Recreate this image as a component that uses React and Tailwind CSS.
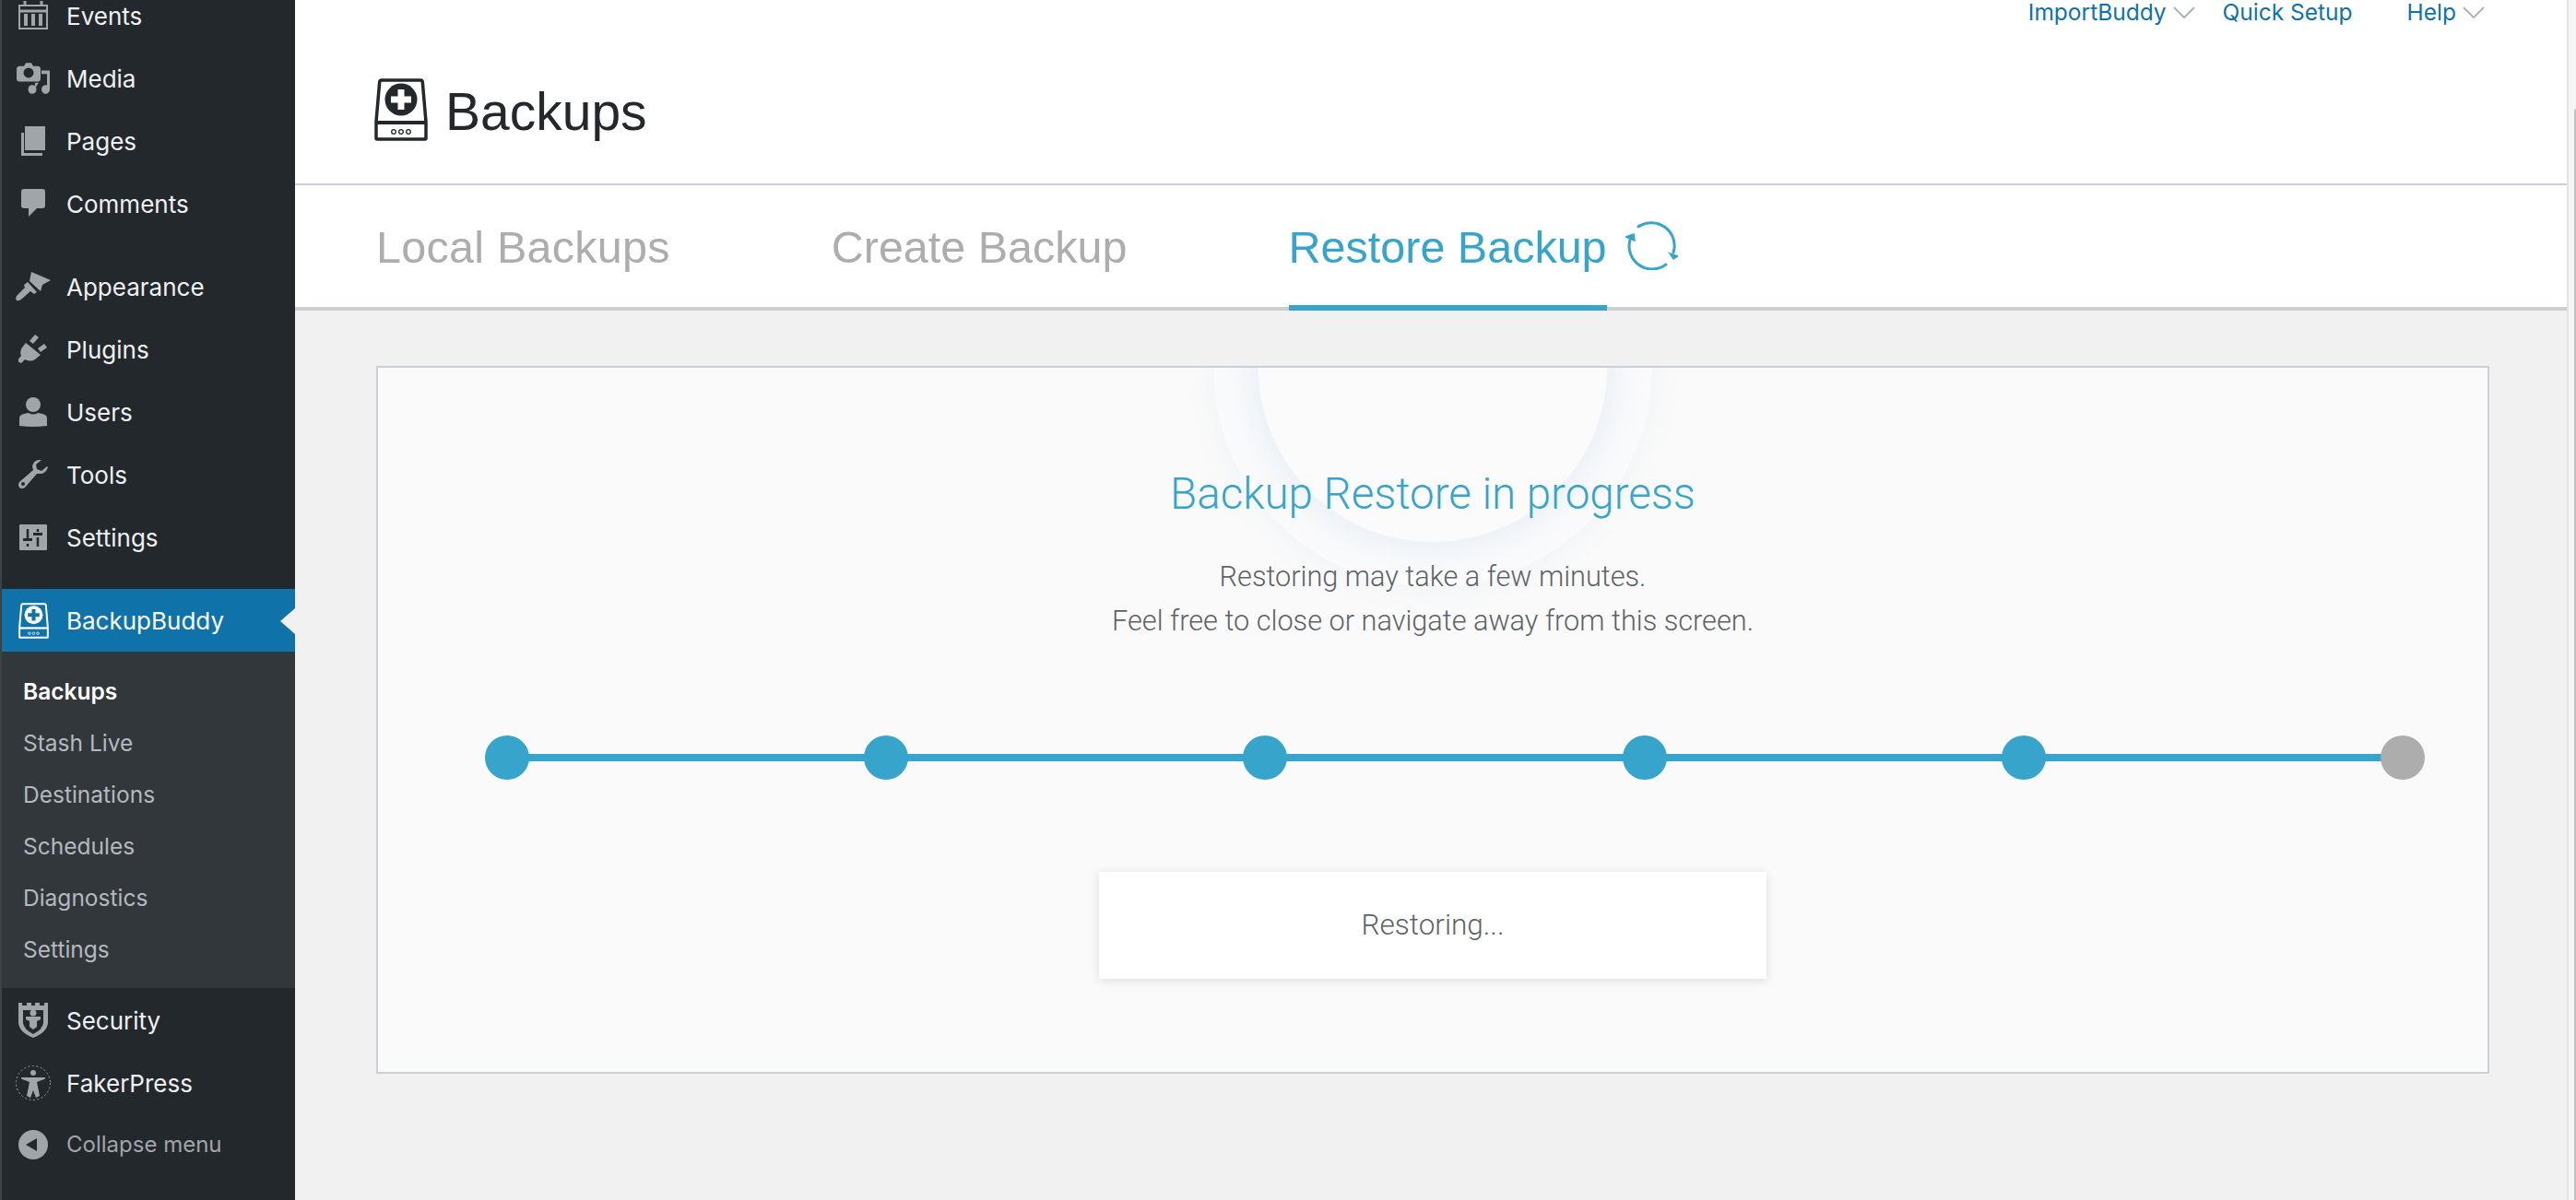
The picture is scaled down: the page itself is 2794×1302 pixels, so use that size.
import React from "react";

const sans = "font-['Inter',sans-serif]";
const helv = "font-['Liberation_Sans',sans-serif]";
const light = "font-['Roboto',sans-serif] font-light";

const EventsIcon = () => (
  <svg viewBox="0 0 32 32" width="32" height="32" fill="none" stroke="#a0a5aa">
    <rect x="1" y="5" width="30" height="25" strokeWidth="2" />
    <path d="M1 11h30" strokeWidth="3" />
    <path d="M8 14v13M16 14v13M24 14v13" strokeWidth="4" />
    <path d="M7 0v6M25 0v6" strokeWidth="3" />
  </svg>
);

const icons = {
  media: (
    <svg viewBox="0 0 36 30" width="36" height="36" preserveAspectRatio="none" fill="#a0a5aa">
      <path d="M3 4h5l2-3h6l2 3h5q3 0 3 3v8q0 3-3 3H3q-3 0-3-3V7q0-3 3-3z" />
      <ellipse cx="13" cy="10" rx="5.5" ry="4.5" fill="#23282d" />
      <path d="M27 8h9v17a4.500 4 0 1 1-3-3.800V11h-6z" />
      <ellipse cx="17" cy="25" rx="4.500" ry="4" />
      <path d="M20 24l4-5h-4z" />
    </svg>
  ),
  pages: (
    <svg viewBox="0 0 26 32" width="26" height="32" fill="#a0a5aa">
      <path d="M4 0h22v26H4z" />
      <path d="M0 7h3v22h20v3H0z" />
    </svg>
  ),
  comments: (
    <svg viewBox="0 0 26 32" width="26" height="32" fill="#a0a5aa">
      <path d="M3 0h20q3 0 3 3v15q0 3-3 3h-6l-9 9v-9H3q-3 0-3-3V3q0-3 3-3z" />
    </svg>
  ),
  appearance: (
    <svg viewBox="0 0 38 32" width="38" height="32" fill="#a0a5aa">
      <path d="M17 0l21 9-9 5-2 7-12-11z" />
      <path d="M13 11l10 11-3 2-4-3-9 8q-3 3-6 2-2-3 1-6l8-8-1-3z" />
    </svg>
  ),
  plugins: (
    <svg viewBox="0 0 32 32" width="32" height="32" fill="#a0a5aa">
      <path d="M18 0l4 3-6 7-4-3zM28 10l3 4-7 5-3-4zM8 9l16 13-6 5q-5 3-11 0l-4 4-5-2 5-6q-2-5 1-9z" />
    </svg>
  ),
  users: (
    <svg viewBox="0 0 30 32" width="30" height="32" fill="#a0a5aa">
      <circle cx="15" cy="8" r="8" />
      <path d="M0 31v-8q0-4 5-5l5-1q5 3 10 0l5 1q5 1 5 5v8q-15 2-30 0z" />
    </svg>
  ),
  tools: (
    <svg viewBox="0 0 32 32" width="32" height="32" fill="#a0a5aa">
      <path d="M22 0q-6 1-7 7l1 4L1 24q-2 3 0 6 3 2 6 0l13-15h5q5-1 7-7l-1-1-6 5-5-2-1-5 6-5z" />
      <circle cx="5" cy="26" r="2" fill="#23282d" />
    </svg>
  ),
  settings: (
    <svg viewBox="0 0 30 28" width="30" height="28" fill="#a0a5aa">
      <path d="M1 0h28q1 0 1 1v26q0 1-1 1H1q-1 0-1-1V1q0-1 1-1z" />
      <path d="M9 5v10M9 21v3M20 5v3M20 14v10" stroke="#23282d" strokeWidth="2.500" />
      <path d="M4 15h10v3H4zM15 9h10v3H15z" fill="#23282d" />
    </svg>
  ),
};

// the drive with a plus, used for the page title and the menu entry
const DriveIcon = ({ width, height, stroke, bg }) => (
  <svg viewBox="0 0 58 68" width={width} height={height} fill="none">
    <path
      d="M8 2h42q2 0 2.300 2L56 47v18q0 1-1 1H3q-1 0-1-1V47L5.700 4Q6 2 8 2z"
      stroke={stroke}
      strokeWidth="3.500"
      strokeLinejoin="round"
    />
    <path d="M3 48h52" stroke={stroke} strokeWidth="4" />
    <circle cx="29" cy="23" r="17.500" fill={stroke} />
    <path d="M29 12v22M18 23h22" stroke={bg} strokeWidth="7" />
    <circle cx="21" cy="58" r="2.300" stroke={stroke} strokeWidth="1.300" />
    <circle cx="29" cy="58" r="2.300" stroke={stroke} strokeWidth="1.300" />
    <circle cx="37" cy="58" r="2.300" stroke={stroke} strokeWidth="1.300" />
  </svg>
);

const ShieldIcon = () => (
  <svg viewBox="0 0 34 40" width="34" height="40" fill="none">
    <path d="M1 1h4v3h5V1h5v3h4V1h5v3h5V1h4v22q-1 10-16 16Q2 33 1 23z" fill="#a0a5aa" />
    <path d="M6 9h22v14q-1 7-11 12Q7 30 6 23z" fill="#23282d" />
    <circle cx="17" cy="12" r="3.500" fill="#a0a5aa" />
    <path d="M9 16h16v3l-4 2v6l-4 3-4-3v-6l-4-2z" fill="#a0a5aa" />
  </svg>
);

const FakerIcon = () => (
  <svg viewBox="0 0 38 38" width="38" height="38" fill="none">
    <circle cx="19" cy="19" r="18.500" stroke="#a0a5aa" strokeWidth="1" strokeDasharray="2 2.500" />
    <circle cx="19" cy="8" r="3" fill="#a0a5aa" />
    <path d="M6 13h26v1.500l-9 3.500 3 15-4 2-3-8-3 8-4-2 3-15-9-3.500z" fill="#a0a5aa" />
  </svg>
);

const CollapseIcon = () => (
  <svg viewBox="0 0 32 32" width="32" height="32">
    <circle cx="16" cy="16" r="16" fill="#a0a5aa" />
    <path d="M8 16l12-7v14z" fill="#23282d" />
  </svg>
);

const SyncIcon = () => (
  <svg viewBox="0 0 57 53" width="57" height="53" fill="none" stroke="#37a4cc" strokeWidth="3" strokeLinecap="round">
    <path d="M14 6A25 25 0 0 1 52 34" />
    <path d="M44 47A25 25 0 0 1 5 20" />
    <path d="M48 35l9 3-5 3z" fill="#37a4cc" strokeWidth="1.500" />
    <path d="M0 17l9-3 1 7z" fill="#37a4cc" strokeWidth="1.500" />
  </svg>
);

const Chevron = () => (
  <svg viewBox="0 0 24 13" width="24" height="13" fill="none" stroke="#b0b3b6" strokeWidth="2">
    <path d="M1 1l11 11L23 1" />
  </svg>
);

const topMenu = [
  { label: "Events", icon: <EventsIcon /> },
  { label: "Media", icon: icons.media },
  { label: "Pages", icon: icons.pages },
  { label: "Comments", icon: icons.comments, gap: true },
  { label: "Appearance", icon: icons.appearance },
  { label: "Plugins", icon: icons.plugins },
  { label: "Users", icon: icons.users },
  { label: "Tools", icon: icons.tools },
  { label: "Settings", icon: icons.settings },
];

const subMenu = ["Stash Live", "Destinations", "Schedules", "Diagnostics", "Settings"];

const IconCell = ({ children }) => (
  <span className="flex w-[70px] shrink-0 justify-center pr-[2px]">{children}</span>
);

const MenuRow = ({ icon, label, className = "" }) => (
  <div className={`flex h-[68px] items-center ${className}`}>
    <IconCell>{icon}</IconCell>
    <span className="text-[26px]">{label}</span>
  </div>
);

const Sidebar = () => (
  <aside className={`${sans} flex w-[320px] shrink-0 flex-col overflow-hidden border-l-2 border-l-[#3c4146] bg-[#23282d] text-[#eef0f1]`}>
    <div className="mt-[-17px]">
      {topMenu.map((item) => (
        <MenuRow key={item.label} icon={item.icon} label={item.label} className={item.gap ? "mb-[22px]" : ""} />
      ))}
    </div>
    <div className="relative mt-[22px] flex h-[68px] items-center bg-[#0f72a8] text-white">
      <IconCell>
        <DriveIcon width={33} height={39} stroke="#ffffff" bg="#0f72a8" />
      </IconCell>
      <span className="text-[26px]">BackupBuddy</span>
      <span className="absolute right-0 top-[21px] h-0 w-0 border-y-[14px] border-r-[16px] border-y-transparent border-r-[#f1f1f1]" />
    </div>
    <div className="h-[365px] bg-[#32373c] pl-[23px] pt-[15px] text-[24.500px] text-[#b4b9be]">
      <div className="flex h-[56px] items-center font-semibold text-white">Backups</div>
      {subMenu.map((item) => (
        <div key={item} className="flex h-[56px] items-center">{item}</div>
      ))}
    </div>
    <MenuRow icon={<ShieldIcon />} label="Security" className="mt-[1px]" />
    <MenuRow icon={<FakerIcon />} label="FakerPress" />
    <div className="flex h-[66px] items-center text-[#a0a5aa]">
      <IconCell><CollapseIcon /></IconCell>
      <span className="text-[24px]">Collapse menu</span>
    </div>
  </aside>
);

const TopLink = ({ label, arrow }) => (
  <span className="flex items-center gap-[7px]">
    {label}
    {arrow && <Chevron />}
  </span>
);

const Steps = () => {
  const dot = "h-12 w-12 shrink-0 rounded-full";
  return (
    <div className="ml-[116px] mr-[68px] mt-[100px] flex items-center">
      {[0, 1, 2, 3, 4].map((i) => (
        <React.Fragment key={i}>
          <div className={`${dot} bg-[#37a4cc]`} />
          <div className="-mx-px h-2 flex-1 bg-[#37a4cc]" />
        </React.Fragment>
      ))}
      <div className={`${dot} bg-[#adadad]`} />
    </div>
  );
};

const Tab = ({ label, active, className = "" }) => (
  <div className={`flex h-[136px] items-center border-b-[6px] pt-[4px] text-[48.500px] ${active ? "border-[#37a4cc] text-[#37a4cc]" : "border-transparent text-[#adadad]"} ${className}`}>
    {label}
  </div>
);

export default function App() {
  return (
    <div className="flex h-[1302px] w-[2794px] overflow-hidden bg-[#f1f1f1]">
      <Sidebar />
      <main className={`${helv} relative flex min-w-0 flex-1 flex-col`}>
        <div className="mr-[10px] bg-white">
          <div className={`${sans} flex h-[26px] justify-end pr-[89px] text-[24.500px] leading-[26px] text-[#0f72a8]`}>
            <TopLink label="ImportBuddy" arrow />
            <span className="ml-[30px] w-[200px]">Quick Setup</span>
            <TopLink label="Help" arrow />
          </div>
          <div className="flex h-[173px] items-center pl-[85px] pt-[12px]">
            <DriveIcon width={60} height={68} stroke="#23282d" bg="#ffffff" />
            <h1 className="ml-[18px] pt-[6px] text-[57px] text-[#23282d]">Backups</h1>
          </div>
          <div className="h-[138px] border-t-2 border-[#ccd0d4]">
            <div className="flex h-[136px] w-full border-b-[4px] border-[#ccd0d4] pl-[88px]">
              <Tab label="Local Backups" className="tracking-[0.25px]" />
              <Tab label="Create Backup" className="ml-[175px]" />
              <Tab label="Restore Backup" active className="ml-[175px]" />
              <div className="ml-[20px] mt-[39px]"><SyncIcon /></div>
            </div>
          </div>
        </div>

        <div className="ml-[88px] mr-[94px] mt-[60px] h-[768px]">
          <div className="relative h-full overflow-hidden border-2 border-[#ccd0d4] bg-[#fafafa]">
            <div className="absolute left-[906px] top-[-238px] h-[476px] w-[476px] rounded-full bg-[#fbfbfc] shadow-[0_0_40px_rgba(205,222,235,0.2)]" />
            <div className="absolute left-[955px] top-[-189px] h-[378px] w-[378px] rounded-full bg-[#fbfbfb] shadow-[0_0_50px_rgba(190,215,235,0.45)]" />
            <div className="relative">
              <h2 className={`${light} pt-[111px] text-center text-[47.500px] leading-[52px] text-[#37a4cc]`}>Backup Restore in progress</h2>
              <p className={`${light} mt-[40px] text-center text-[30.700px] leading-[48px] text-[#5e6367]`}>
                Restoring may take a few minutes.
                <br />
                Feel free to close or navigate away from this screen.
              </p>
              <Steps />
              <div className={`${light} mx-auto mt-[100px] flex h-[116px] w-[724px] items-center justify-center bg-white text-[31.500px] text-[#5e6367] shadow-[0_2px_10px_rgba(0,0,0,0.12)]`}>
                Restoring...
              </div>
            </div>
          </div>
        </div>
        {/* scrollbar track on the right */}
        <div className="absolute right-0 top-0 h-[1302px] w-[10px] border-l-2 border-[#e2e3e3] bg-[#f5f5f5]">
          <div className="absolute right-0 top-[118px] h-[1184px] w-[2px] rounded-tl bg-[#c1c1c1]" />
        </div>
      </main>
    </div>
  );
}
